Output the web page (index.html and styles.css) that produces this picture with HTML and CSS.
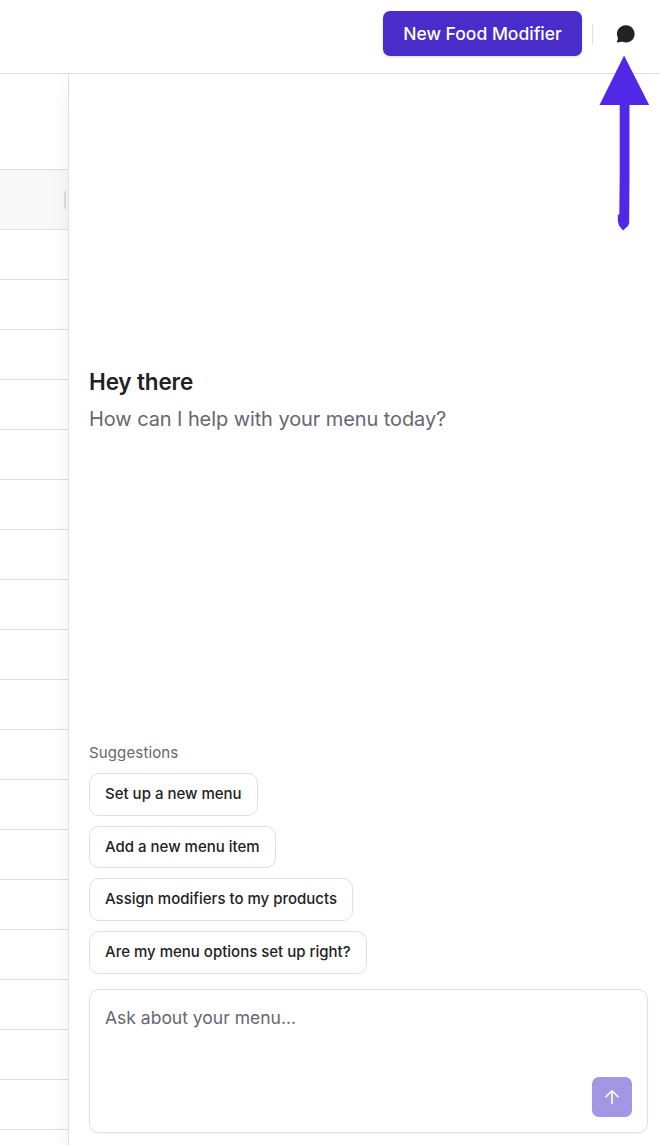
FILE: index.html
```html
<!DOCTYPE html>
<html lang="en">
<head>
<meta charset="utf-8">
<title>Food Modifiers</title>
<link rel="stylesheet" href="styles.css">
</head>
<body>
<div class="app">
  <header class="topbar">
    <button class="primary">New Food Modifier</button>
    <span class="divider"></span>
    <button class="chat-toggle" aria-label="Chat">
      <svg width="20" height="20" viewBox="0 0 20 20"><path d="M10 1.3a8.6 8.6 0 1 1-3.4 16.5c-.6-.2-.8-.1-1.3 0l-3.6.8c-.7.1-1-.3-.8-.9l1-3c.1-.5 0-.8-.2-1.3A8.6 8.6 0 0 1 10 1.3Z" fill="#202224"/></svg>
    </button>
  </header>
  <div class="content">
    <div class="table">
      <div class="row toolbar"></div>
      <div class="row head"><span class="grip"></span></div>
      <div class="row"></div><div class="row"></div><div class="row"></div>
      <div class="row"></div><div class="row"></div><div class="row"></div>
      <div class="row"></div><div class="row"></div><div class="row"></div>
      <div class="row"></div><div class="row"></div><div class="row"></div>
      <div class="row"></div><div class="row"></div><div class="row"></div>
      <div class="row"></div><div class="row"></div><div class="row"></div>
      <div class="row last"></div>
    </div>
    <main class="panel">
      <section class="greeting">
        <h1>Hey there</h1>
        <p>How can I help with your menu today?</p>
      </section>
      <section class="suggestions">
        <h2>Suggestions</h2>
        <button class="chip">Set up a new menu</button>
        <button class="chip">Add a new menu item</button>
        <button class="chip">Assign modifiers to my products</button>
        <button class="chip">Are my menu options set up right?</button>
      </section>
      <div class="composer">
        <span class="placeholder">Ask about your menu...</span>
        <button class="send" aria-label="Send">
          <svg width="20" height="20" viewBox="0 0 20 20" fill="none" stroke="#fff" stroke-width="1.6" stroke-linecap="round" stroke-linejoin="round"><path d="M10 16.3V3.8M4 9.8l6-6 6 6"/></svg>
        </button>
      </div>
    </main>
  </div>
  <svg class="pointer" width="52" height="178" viewBox="0 0 52 178"><path d="M26.1 .5 51.2 50H31.5V119L31.2 168 30 171 25 175.5 21 170.5 19.8 166V159.5H21.3L21.7 119V50H1.5Z" fill="#5128e8"/></svg>
</div>
</body>
</html>
```

FILE: styles.css
```css
* { box-sizing: border-box; }
body { margin: 0; background: #fff; color: #202224; font-family: Inter, "Liberation Sans", sans-serif; }
button { font-family: inherit; margin: 0; padding: 0; border: 0; }
.app { position: relative; display: flex; flex-direction: column; width: 660px; height: 1145px; overflow: hidden; }
.topbar { display: flex; justify-content: flex-end; align-items: center; flex: 0 0 74px; padding: 0 25px 6px 0; border-bottom: 1px solid #dedfe2; }
.primary { width: 199px; height: 45px; border-radius: 7px; background: #482dca; color: #fff; font-size: 17.5px; font-weight: 500; letter-spacing: 0; box-shadow: 0 1px 3px rgba(0, 0, 0, .15); }
.divider { width: 1px; height: 20px; margin: 0 23px 0 10px; background: #dedfe2; }
.chat-toggle { display: flex; width: 20px; height: 20px; margin-right: -1px; background: none; }
.content { display: flex; flex: 1; min-height: 0; }
.table { flex: 0 0 68px; }
.row { height: 50px; border-bottom: 1px solid #dedfe2; }
.row.toolbar { height: 96px; }
.row.head { display: flex; align-items: center; justify-content: flex-end; height: 60px; padding-right: 2px; background: #f8f8f8; }
.grip { width: 2px; height: 18px; background: #dadde2; }
.row.last { border-bottom: 0; }
.panel { display: flex; flex-direction: column; flex: 1; padding: 0 12px 12px 20px; border-left: 1px solid #dedfe2; background: #fff; box-shadow: 0 14px 20px rgba(0, 0, 0, .06); clip-path: inset(0 0 0 -30px); }
.greeting { display: flex; flex-direction: column; flex: 1; justify-content: center; padding-bottom: 16px; }
.greeting h1 { margin: 0 0 7px; font-size: 22.5px; line-height: 30px; font-weight: 600; letter-spacing: -0.15px; }
.greeting p { margin: 0; color: #676672; font-size: 20px; line-height: 30px; letter-spacing: -0.09px; }
.suggestions { display: flex; flex-direction: column; align-items: flex-start; gap: 10px; }
.suggestions h2 { margin: 0 0 1px; color: #676672; font-size: 15px; line-height: 19px; font-weight: 400; letter-spacing: 0.14px; }
.chip { height: 42.67px; padding: 0 15px 2px; border: 1px solid #dfdfe2; border-radius: 10px; background: #fff; color: #202224; font-size: 15px; font-weight: 500; }
.composer { display: flex; flex-direction: column; justify-content: space-between; flex: 0 0 144px; margin-top: 15.3px; padding: 15px; border: 1px solid #dfdfe2; border-radius: 10px; box-shadow: 0 1px 2px rgba(0, 0, 0, .05); }
.placeholder { color: #676672; font-size: 17.5px; line-height: 25px; }
.send { display: flex; align-items: center; justify-content: center; align-self: flex-end; width: 40px; height: 40px; border-radius: 7px; background: #a396e4; }
.pointer { position: absolute; left: 598px; top: 55px; }
```
